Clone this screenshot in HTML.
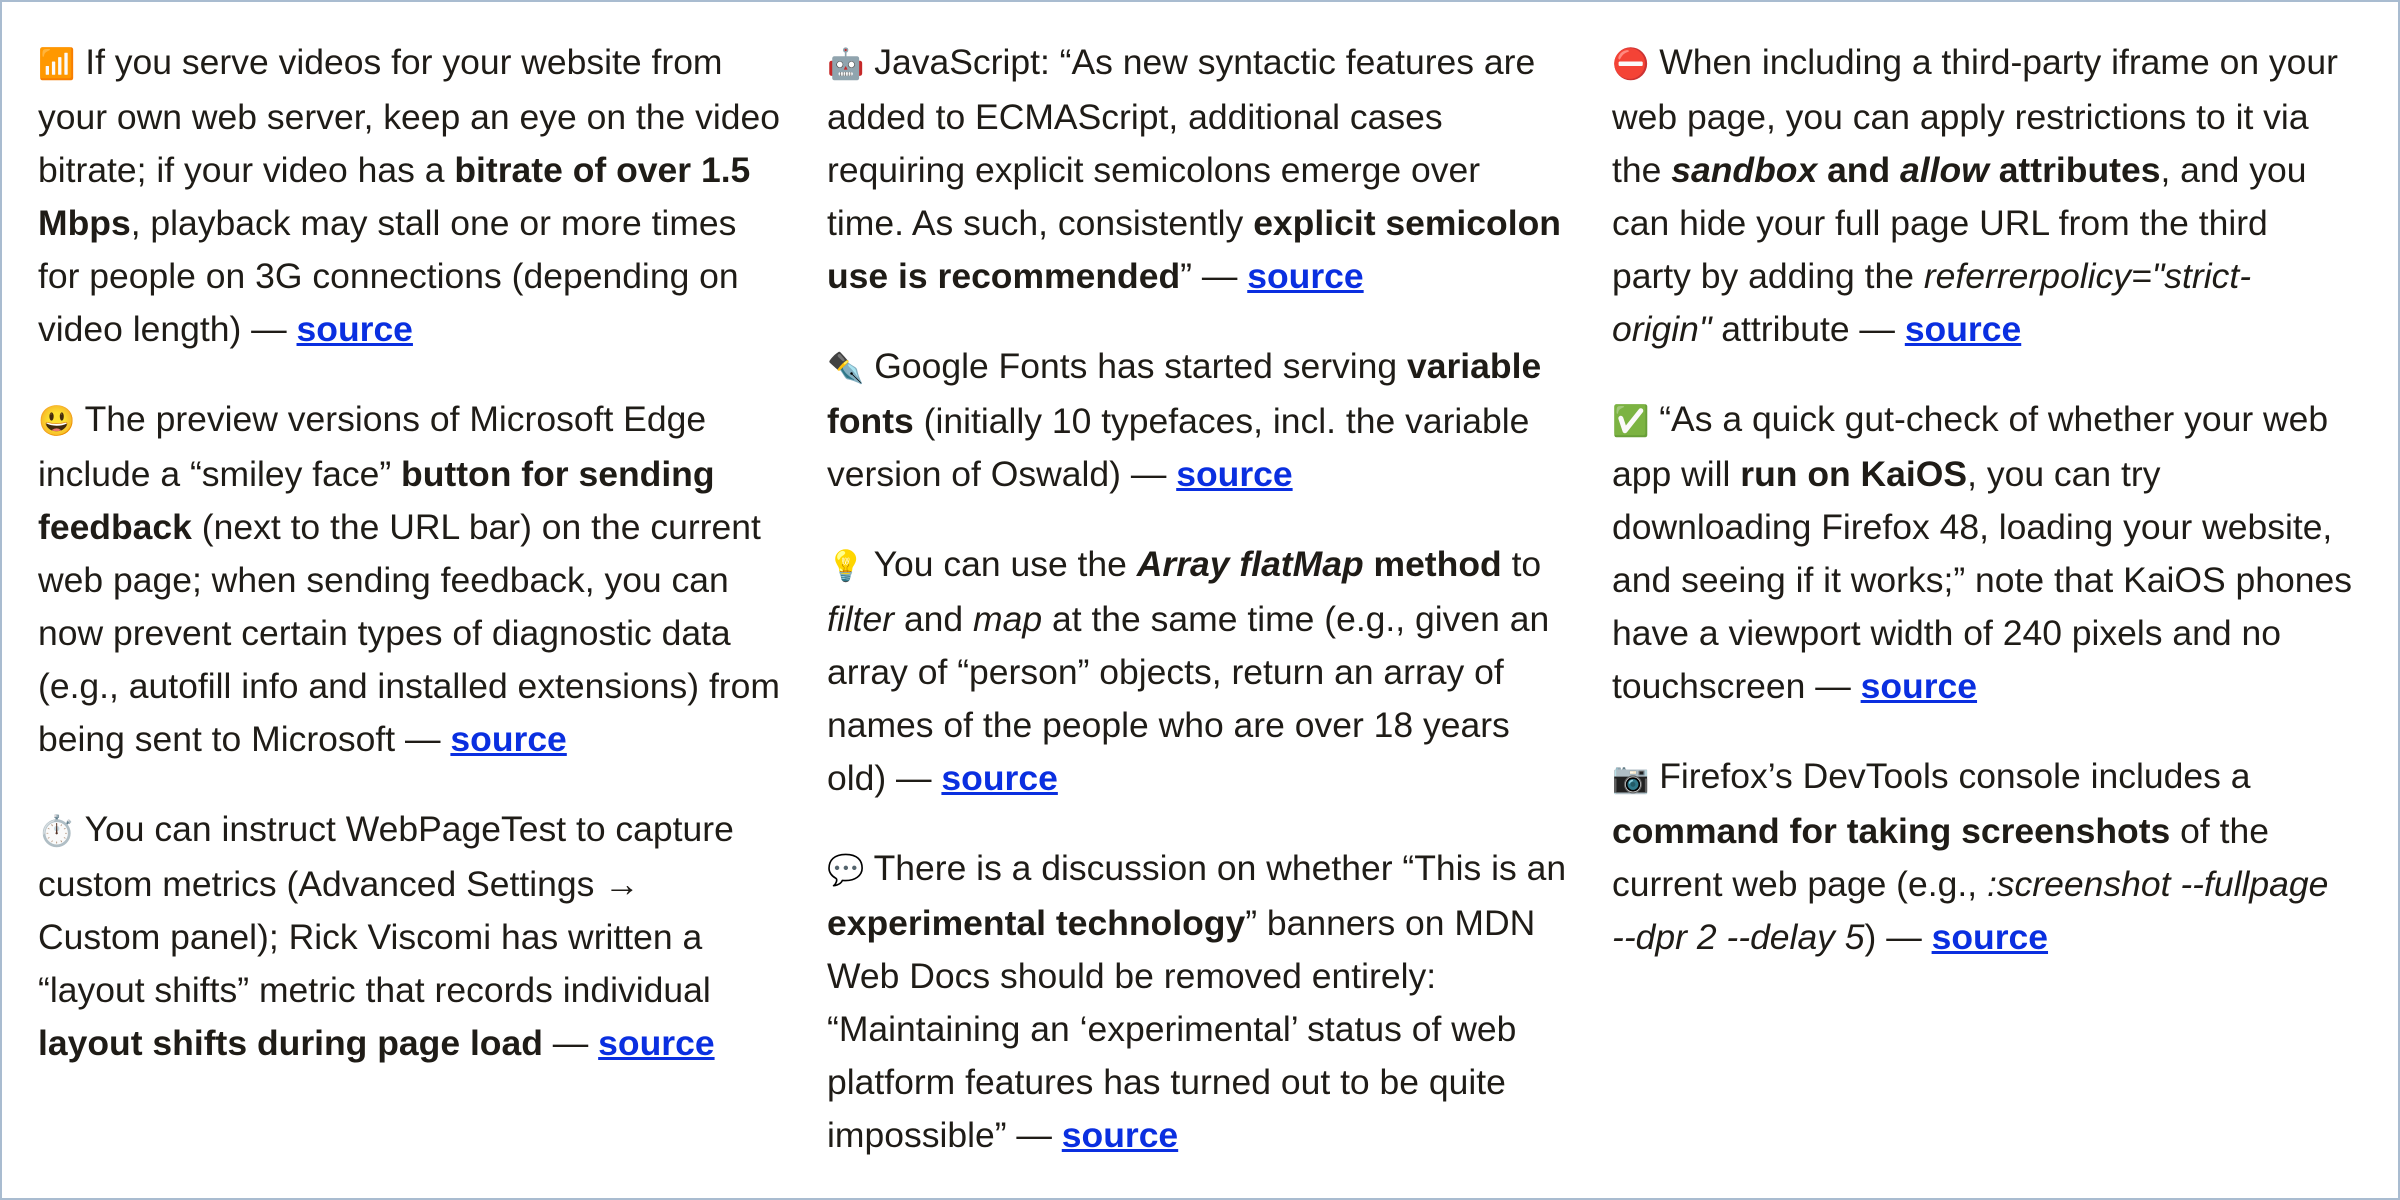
<!DOCTYPE html>
<html><head><meta charset="utf-8"><style>
html,body{margin:0;padding:0;background:#fff;}
body{width:2400px;height:1200px;position:relative;overflow:hidden;font-family:"Liberation Sans","Noto Sans CJK JP",sans-serif;color:#1f1c17;}
.frame{position:absolute;left:0;top:0;width:2396px;height:1196px;border:2px solid #a9bcd0;}
.col{position:absolute;top:36px;font-size:35.5px;line-height:53px;letter-spacing:0;white-space:nowrap;}
.col p{margin:0 0 37px 0;}
b{font-weight:bold;}
a{color:#0a2fe0;font-weight:bold;text-decoration:underline;text-decoration-thickness:3px;}
.e{font-size:30px;letter-spacing:0;}
</style></head><body>
<div class="frame"></div>
<div class="col" style="left:38px">
<p><span class="e">📶</span> If you serve videos for your website from<br>your own web server, keep an eye on the video<br>bitrate; if your video has a <b>bitrate of over 1.5</b><br><b>Mbps</b>, playback may stall one or more times<br>for people on 3G connections (depending on<br>video length) — <a>source</a></p>
<p><span class="e">😃</span> The preview versions of Microsoft Edge<br>include a “smiley face” <b>button for sending</b><br><b>feedback</b> (next to the URL bar) on the current<br>web page; when sending feedback, you can<br>now prevent certain types of diagnostic data<br>(e.g., autofill info and installed extensions) from<br>being sent to Microsoft — <a>source</a></p>
<p><span class="e">⏱️</span> You can instruct WebPageTest to capture<br>custom metrics (Advanced Settings →<br>Custom panel); Rick Viscomi has written a<br>“layout shifts” metric that records individual<br><b>layout shifts during page load</b> — <a>source</a></p>
</div>
<div class="col" style="left:827px">
<p><span class="e">🤖</span> JavaScript: “As new syntactic features are<br>added to ECMAScript, additional cases<br>requiring explicit semicolons emerge over<br>time. As such, consistently <b>explicit semicolon</b><br><b>use is recommended</b>” — <a>source</a></p>
<p><span class="e">✒️</span> Google Fonts has started serving <b>variable</b><br><b>fonts</b> (initially 10 typefaces, incl. the variable<br>version of Oswald) — <a>source</a></p>
<p><span class="e">💡</span> You can use the <b><i>Array flatMap</i> method</b> to<br><i>filter</i> and <i>map</i> at the same time (e.g., given an<br>array of “person” objects, return an array of<br>names of the people who are over 18 years<br>old) — <a>source</a></p>
<p><span class="e">💬</span> There is a discussion on whether “This is an<br><b>experimental technology</b>” banners on MDN<br>Web Docs should be removed entirely:<br>“Maintaining an ‘experimental’ status of web<br>platform features has turned out to be quite<br>impossible” — <a>source</a></p>
</div>
<div class="col" style="left:1612px">
<p><span class="e">⛔</span> When including a third-party iframe on your<br>web page, you can apply restrictions to it via<br>the <b><i>sandbox</i> and <i>allow</i> attributes</b>, and you<br>can hide your full page URL from the third<br>party by adding the <i>referrerpolicy="strict-</i><br><i>origin"</i> attribute — <a>source</a></p>
<p><span class="e">✅</span> “As a quick gut-check of whether your web<br>app will <b>run on KaiOS</b>, you can try<br>downloading Firefox 48, loading your website,<br>and seeing if it works;” note that KaiOS phones<br>have a viewport width of 240 pixels and no<br>touchscreen — <a>source</a></p>
<p><span class="e">📷</span> Firefox’s DevTools console includes a<br><b>command for taking screenshots</b> of the<br>current web page (e.g., <i>:screenshot --fullpage</i><br><i>--dpr 2 --delay 5</i>) — <a>source</a></p>
</div>
</body></html>
